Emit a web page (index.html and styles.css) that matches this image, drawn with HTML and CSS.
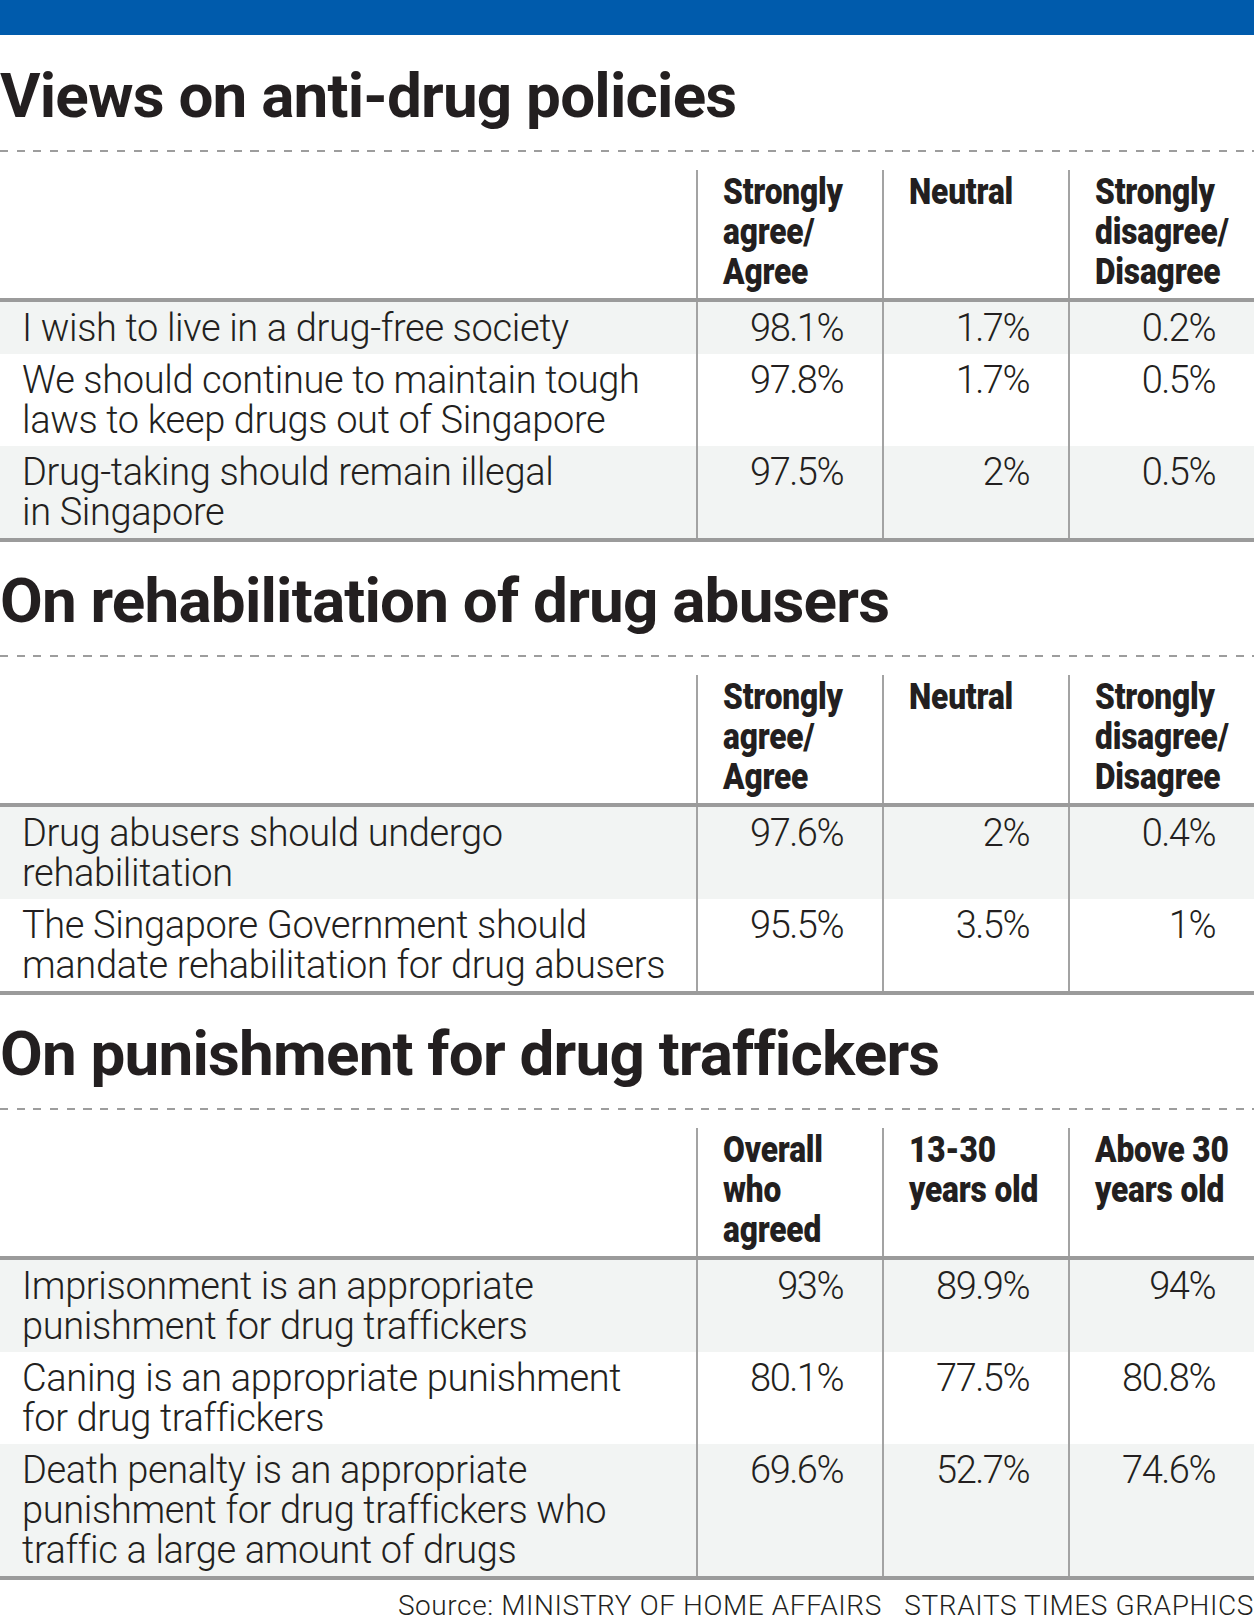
FILE: index.html
```html
<!DOCTYPE html>
<html lang="en">
<head>
<meta charset="utf-8">
<title>Views on anti-drug policies</title>
<link rel="stylesheet" href="styles.css">
</head>
<body>
<div class="topbar"></div>

<section class="block">
  <h2 class="title">Views on anti-drug policies</h2>
  <div class="dash"></div>
  <div class="table">
    <div class="row head">
      <div class="cell label"></div>
      <div class="cell hcell"><span class="htext">Strongly<br>agree/<br>Agree</span></div>
      <div class="cell hcell"><span class="htext">Neutral</span></div>
      <div class="cell hcell"><span class="htext">Strongly<br>disagree/<br>Disagree</span></div>
    </div>
    <div class="tbody">
      <div class="row">
        <div class="cell label">I wish to live in a drug-free society</div>
        <div class="cell num">98.1%</div>
        <div class="cell num">1.7%</div>
        <div class="cell num">0.2%</div>
      </div>
      <div class="row">
        <div class="cell label">We should continue to maintain tough<br>laws to keep drugs out of Singapore</div>
        <div class="cell num">97.8%</div>
        <div class="cell num">1.7%</div>
        <div class="cell num">0.5%</div>
      </div>
      <div class="row">
        <div class="cell label">Drug-taking should remain illegal<br>in Singapore</div>
        <div class="cell num">97.5%</div>
        <div class="cell num">2%</div>
        <div class="cell num">0.5%</div>
      </div>
    </div>
  </div>
</section>

<section class="block">
  <h2 class="title">On rehabilitation of drug abusers</h2>
  <div class="dash"></div>
  <div class="table">
    <div class="row head">
      <div class="cell label"></div>
      <div class="cell hcell"><span class="htext">Strongly<br>agree/<br>Agree</span></div>
      <div class="cell hcell"><span class="htext">Neutral</span></div>
      <div class="cell hcell"><span class="htext">Strongly<br>disagree/<br>Disagree</span></div>
    </div>
    <div class="tbody">
      <div class="row">
        <div class="cell label">Drug abusers should undergo<br>rehabilitation</div>
        <div class="cell num">97.6%</div>
        <div class="cell num">2%</div>
        <div class="cell num">0.4%</div>
      </div>
      <div class="row">
        <div class="cell label">The Singapore Government should<br>mandate rehabilitation for drug abusers</div>
        <div class="cell num">95.5%</div>
        <div class="cell num">3.5%</div>
        <div class="cell num">1%</div>
      </div>
    </div>
  </div>
</section>

<section class="block">
  <h2 class="title">On punishment for drug traffickers</h2>
  <div class="dash"></div>
  <div class="table">
    <div class="row head">
      <div class="cell label"></div>
      <div class="cell hcell"><span class="htext">Overall<br>who<br>agreed</span></div>
      <div class="cell hcell"><span class="htext">13-30<br>years old</span></div>
      <div class="cell hcell"><span class="htext">Above 30<br>years old</span></div>
    </div>
    <div class="tbody">
      <div class="row">
        <div class="cell label">Imprisonment is an appropriate<br>punishment for drug traffickers</div>
        <div class="cell num">93%</div>
        <div class="cell num">89.9%</div>
        <div class="cell num">94%</div>
      </div>
      <div class="row">
        <div class="cell label">Caning is an appropriate punishment<br>for drug traffickers</div>
        <div class="cell num">80.1%</div>
        <div class="cell num">77.5%</div>
        <div class="cell num">80.8%</div>
      </div>
      <div class="row">
        <div class="cell label">Death penalty is an appropriate<br>punishment for drug traffickers who<br>traffic a large amount of drugs</div>
        <div class="cell num">69.6%</div>
        <div class="cell num">52.7%</div>
        <div class="cell num">74.6%</div>
      </div>
    </div>
  </div>
</section>

<p class="source">Source: MINISTRY OF HOME AFFAIRS&nbsp;&nbsp; STRAITS TIMES GRAPHICS</p>
</body>
</html>
```

FILE: styles.css
```css
* {
  box-sizing: border-box;
}

body {
  margin: 0;
  width: 1254px;
  background: #ffffff;
  color: #231f20;
  font-family: Roboto, "Liberation Sans", sans-serif;
}

.topbar {
  height: 35px;
  background: #005bac;
}

.block {
  padding-top: 28px;
}

.block:first-of-type {
  padding-top: 30px;
}

.title {
  margin: 0;
  font-family: Roboto, "Liberation Sans", sans-serif;
  font-weight: 700;
  font-size: 62px;
  line-height: 62px;
  letter-spacing: -0.8px;
  color: #231f20;
}

.dash {
  height: 2px;
  margin: 23px 0 18px;
  background: repeating-linear-gradient(to right, #9d9d9d 0 8px, transparent 8px 16.7px);
}

.row {
  display: grid;
  grid-template-columns: 696px 186px 186px 186px;
}

.cell + .cell {
  border-left: 2px solid #a3a3a3;
}

.head .cell {
  padding: 2px 0 6px 25px;
  font-family: Roboto, "Liberation Sans", sans-serif;
  font-weight: 900;
  font-size: 36px;
  line-height: 40px;
  white-space: nowrap;
}

.htext {
  display: inline-block;
  transform: scaleX(0.88);
  transform-origin: left top;
  letter-spacing: -0.2px;
}

.tbody {
  border-top: 4px solid #9b9b9b;
  border-bottom: 4px solid #9b9b9b;
}

.tbody .row:nth-child(odd) {
  background: #f2f4f3;
}

.tbody .cell {
  padding: 6px 0 6px;
  font-family: Roboto, "Liberation Sans", sans-serif;
  font-weight: 300;
  font-size: 38px;
  line-height: 40px;
}

.tbody .label {
  padding-left: 22px;
  white-space: nowrap;
  letter-spacing: -0.35px;
}

.tbody .num {
  text-align: right;
  padding-right: 39px;
  letter-spacing: -1.5px;
}

.source {
  margin: 10px 0 0;
  text-align: right;
  font-family: Roboto, "Liberation Sans", sans-serif;
  font-weight: 300;
  font-size: 28px;
  line-height: 32px;
  letter-spacing: 0.6px;
  white-space: nowrap;
}
```
